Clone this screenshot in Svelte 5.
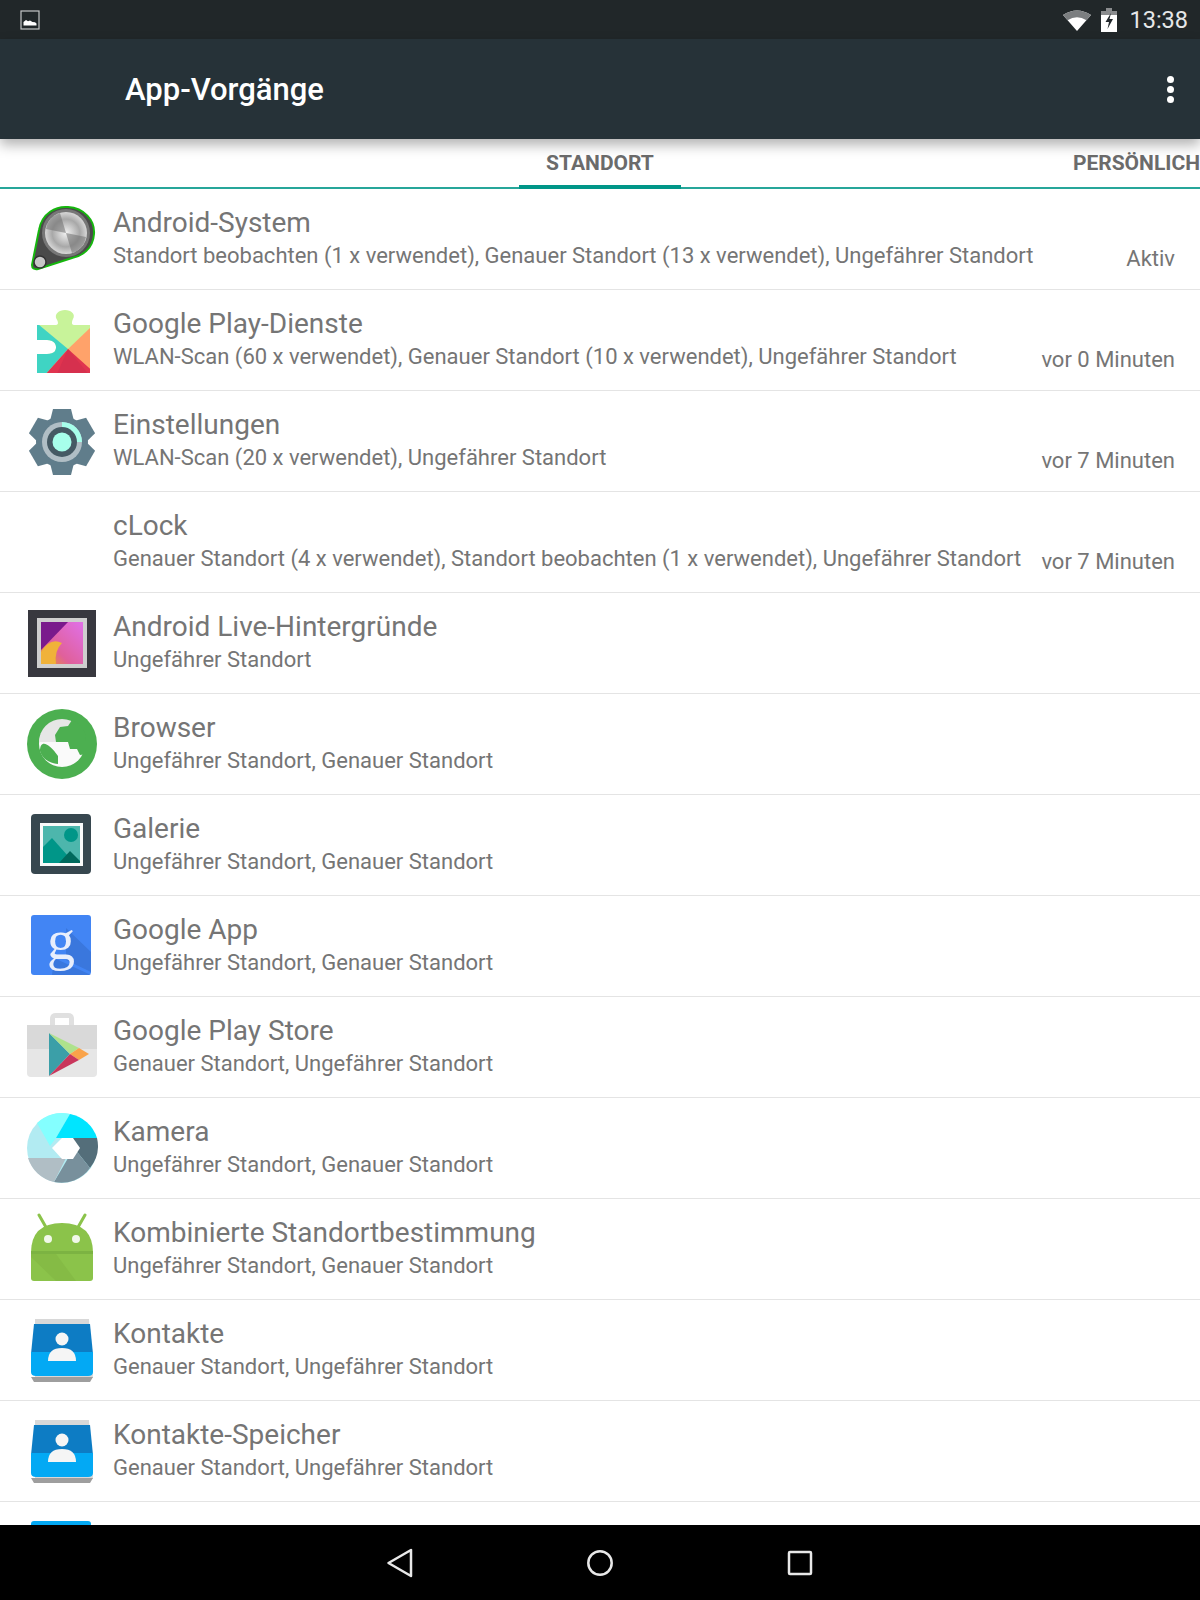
<script>
  const rows = [
    { icon: "system", name: "Android-System", sub: "Standort beobachten (1 x verwendet), Genauer Standort (13 x verwendet), Ungefährer Standort", time: "Aktiv" },
    { icon: "play", name: "Google Play-Dienste", sub: "WLAN-Scan (60 x verwendet), Genauer Standort (10 x verwendet), Ungefährer Standort", time: "vor 0 Minuten" },
    { icon: "gear", name: "Einstellungen", sub: "WLAN-Scan (20 x verwendet), Ungefährer Standort", time: "vor 7 Minuten" },
    { icon: "", name: "cLock", sub: "Genauer Standort (4 x verwendet), Standort beobachten (1 x verwendet), Ungefährer Standort", time: "vor 7 Minuten" },
    { icon: "wall", name: "Android Live-Hintergründe", sub: "Ungefährer Standort" },
    { icon: "browser", name: "Browser", sub: "Ungefährer Standort, Genauer Standort" },
    { icon: "gallery", name: "Galerie", sub: "Ungefährer Standort, Genauer Standort" },
    { icon: "google", name: "Google App", sub: "Ungefährer Standort, Genauer Standort" },
    { icon: "store", name: "Google Play Store", sub: "Genauer Standort, Ungefährer Standort" },
    { icon: "camera", name: "Kamera", sub: "Ungefährer Standort, Genauer Standort" },
    { icon: "android", name: "Kombinierte Standortbestimmung", sub: "Ungefährer Standort, Genauer Standort" },
    { icon: "contacts", name: "Kontakte", sub: "Genauer Standort, Ungefährer Standort" },
    { icon: "contacts", name: "Kontakte-Speicher", sub: "Genauer Standort, Ungefährer Standort" },
    { icon: "messages", name: "Nachrichten", sub: "" }
  ];
</script>

<div class="screen">
  <div class="status">
    <svg class="notif" width="20" height="20" viewBox="0 0 20 20">
      <rect x="1" y="1" width="18" height="18" fill="none" stroke="#c4c6c7" stroke-width="1.2" />
      <path d="M3.5 15.5V12l2.5-2 2 1.2 2-.8 2.5 1.6 2.500.3 1.500 1.200v2z" fill="#fff" />
    </svg>
    <div class="status-right">
      <svg width="30" height="22" viewBox="0 0 30 22">
        <path d="M1 6Q15-3 29 6L15 22z" fill="#fff" />
        <path d="M1 6Q15-3 29 6L24.500 11.200Q15 5.500 5.500 11.200z" fill="#7b7e80" />
      </svg>
      <svg width="16" height="24" viewBox="0 0 16 24">
        <path d="M5 0h6v3h5v21H0V3h5z" fill="#fff" />
        <path d="M5 0h6v3h5v4H0V3h5z" fill="#8a8c8e" />
        <path d="M10 5 4.500 14H8l-1.500 7L12 11H8.500z" fill="#22282c" />
      </svg>
      <span class="clock">13:38</span>
    </div>
  </div>

  <header class="toolbar">
    <h1>App-Vorgänge</h1>
    <div class="overflow"><i></i><i></i><i></i></div>
  </header>

  <div class="tabs">
    <div class="tab active">STANDORT</div>
    <div class="tab right">PERSÖNLICH</div>
  </div>

  <div class="list">
    {#each rows as row}
      <div class="row">
        <div class="icon">
          {#if row.icon === "system"}
            <svg width="72" height="72" viewBox="0 0 72 72">
              <defs>
                <radialGradient id="metal" cx="0.5" cy="0.5" r="0.55">
                  <stop offset="0" stop-color="#f2f2f2" />
                  <stop offset="0.6" stop-color="#a8a8a8" />
                  <stop offset="1" stop-color="#e6e6e6" />
                </radialGradient>
              </defs>
              <path d="M6 62 13 27C16 10 30 3 42 4 58 5 69 17 68 31 67 46 56 53 46 55L12 66Q6 67 6 62z" fill="#4a4a4a" stroke="#16b60e" stroke-width="2" />
              <circle cx="40" cy="30" r="24" fill="#777" />
              <circle cx="40" cy="30" r="21" fill="url(#metal)" />
              <path d="M40 30 20 26Q22 14 34 10zM40 30 60 34Q58 46 46 50z" fill="#6f6f6f" opacity="0.55" />
              <circle cx="14" cy="59" r="6" fill="#c8c8c8" stroke="#333" stroke-width="1.500" />
            </svg>
          {:else if row.icon === "play"}
            <svg width="72" height="72" viewBox="0 0 72 72">
              <defs>
                <clipPath id="puzzle">
                  <path d="M11 21H30C33 21 32 17 30.500 15 28 10 33 6 39 6 45 6 50 10 47 15 46 17 45 21 48 21H64V69H11V50H21C29 50 30 46 30 43 30 40 28 36 21 36H11z" />
                </clipPath>
              </defs>
              <g clip-path="url(#puzzle)">
                <rect width="72" height="72" fill="#c8f39a" />
                <path d="M0 10 42 45 18 72H0z" fill="#3fd4c3" />
                <path d="M42 45 64 24V72z" fill="#ffa26a" />
                <path d="M42 45 72 72H18z" fill="#e0344f" />
                <path d="M42 45 64 72H30z" fill="#d6304e" />
              </g>
            </svg>
          {:else if row.icon === "gear"}
            <svg width="72" height="72" viewBox="0 0 72 72">
              <g fill="#607d8b">
                <circle cx="36" cy="37" r="26" />
                <g id="teeth">
                  <path d="M27 4H45L48 16H24z" />
                  <path d="M27 70H45L48 58H24z" />
                  <path d="M27 4H45L48 16H24z" transform="rotate(60 36 37)" />
                  <path d="M27 4H45L48 16H24z" transform="rotate(120 36 37)" />
                  <path d="M27 4H45L48 16H24z" transform="rotate(240 36 37)" />
                  <path d="M27 4H45L48 16H24z" transform="rotate(300 36 37)" />
                </g>
              </g>
              <circle cx="36" cy="37" r="20" fill="#b0bec5" />
              <path d="M36 17A20 20 0 0 1 56 37H49A13 13 0 0 0 36 24z" fill="#a7ffeb" />
              <circle cx="36" cy="37" r="15" fill="#455a64" />
              <circle cx="36" cy="37" r="9.500" fill="#a7ffeb" />
            </svg>
          {:else if row.icon === "wall"}
            <svg width="72" height="72" viewBox="0 0 72 72">
              <defs>
                <linearGradient id="wallbg" x1="0" y1="1" x2="1" y2="0">
                  <stop offset="0" stop-color="#e8a020" />
                  <stop offset="0.35" stop-color="#e0609a" />
                  <stop offset="1" stop-color="#e070e8" />
                </linearGradient>
              </defs>
              <rect x="2" y="3" width="68" height="67" fill="#38383f" />
              <rect x="11" y="11" width="50" height="50" fill="#cfcfcf" />
              <rect x="15" y="15" width="42" height="42" fill="url(#wallbg)" />
              <path d="M15 15H42L15 43z" fill="#7a1a8c" />
              <path d="M15 57V45Q24 30 36 36 28 44 30 57z" fill="#f0b23a" />
            </svg>
          {:else if row.icon === "browser"}
            <svg width="72" height="72" viewBox="0 0 72 72">
              <circle cx="36" cy="36" r="35" fill="#4caf50" />
              <circle cx="36" cy="36" r="23" fill="#fafafa" />
              <path d="M13 34A23 23 0 0 1 59 34H13z" fill="#e6e6e6" />
              <path d="M14 43C14 30 24 36 32 48V56C22 55 16 50 14 43zM29 27 34 19 42 18 46 12C54 15 61 24 60 33V46L54 47 51 41H44L42 34H30z" fill="#4caf50" />
            </svg>
          {:else if row.icon === "gallery"}
            <svg width="72" height="72" viewBox="0 0 72 72">
              <rect x="5" y="5" width="60" height="60" rx="4" fill="#37474f" />
              <rect x="14" y="14" width="43" height="43" fill="#fafafa" />
              <rect x="17" y="17" width="37" height="37" fill="#4db6ac" />
              <circle cx="45" cy="26" r="7" fill="#009688" />
              <path d="M17 54V38L26 29 42 47 38 54z" fill="#009688" />
              <path d="M33 54 44 42 54 52V54z" fill="#00695c" />
            </svg>
          {:else if row.icon === "google"}
            <svg width="72" height="72" viewBox="0 0 72 72">
              <rect x="5" y="5" width="60" height="60" rx="3" fill="#4285f4" />
              <path d="M28 48 65 65H26zM40 18 65 42V62L40 50z" fill="#3a77dd" />
              <text x="35" y="49" class="g">g</text>
            </svg>
          {:else if row.icon === "store"}
            <svg width="72" height="72" viewBox="0 0 72 72">
              <path d="M24 14V8Q24 2 30 2H42Q48 2 48 8V14H43V7H29V14z" fill="#e0e0e0" />
              <path d="M1 14H71V62Q71 66 67 66H5Q1 66 1 62z" fill="#e6e6e6" />
              <rect x="1" y="14" width="70" height="24" fill="#d9d9d9" />
              <path d="M23 22 44 43 23 65z" fill="#3b9fa8" />
              <path d="M23 22 44 43 53 37z" fill="#aee28c" />
              <path d="M44 43 53 37 63 43 53 49z" fill="#f9a34a" />
              <path d="M23 65 44 43 53 49z" fill="#c9365c" />
            </svg>
          {:else if row.icon === "camera"}
            <svg width="72" height="72" viewBox="0 0 72 72">
              <circle cx="36" cy="36" r="35" fill="#b2ebf2" />
              <path d="M11 11A35 35 0 0 1 44 2L30 26 24 34z" fill="#84ffff" />
              <path d="M44 2A35 35 0 0 1 71 26H36L30 26z" fill="#00e5ff" />
              <path d="M71 26A35 35 0 0 1 64 56L48 36 36 26z" fill="#546e7a" />
              <path d="M64 56A35 35 0 0 1 28 70L48 36z" fill="#78909c" />
              <path d="M28 70A35 35 0 0 1 2 46H40z" fill="#b0bec5" />
              <path d="M26 36 36 26H47L54 36 47 47H36z" fill="#fff" />
            </svg>
          {:else if row.icon === "android"}
            <svg width="72" height="72" viewBox="0 0 72 72">
              <path d="M13 2 21 16M59 2 51 16" stroke="#8bc34a" stroke-width="3" stroke-linecap="round" />
              <path d="M5 40Q5 10 36 10 67 10 67 40V65Q67 68 64 68H8Q5 68 5 65z" fill="#8bc34a" />
              <path d="M5 38H67V41H5z" fill="#7cb342" />
              <path d="M5 41H30L50 68H30L5 44z" fill="#85bb45" />
              <circle cx="22" cy="26" r="4" fill="#f1f8e9" />
              <circle cx="50" cy="26" r="4" fill="#f1f8e9" />
            </svg>
          {:else if row.icon === "contacts"}
            <svg width="72" height="72" viewBox="0 0 72 72">
              <path d="M9 5H63L67 64H9z" fill="#d8d8d8" />
              <path d="M8 10H64L67 40H5z" fill="#0d7cc4" />
              <path d="M5 38H67V58Q67 62 62 62H10Q5 62 5 58z" fill="#03a9f4" />
              <path d="M5 63H67L64 68H8z" fill="#9e9e9e" />
              <circle cx="36" cy="25" r="6.500" fill="#f5f5f5" />
              <path d="M22 47Q22 34 36 34 50 34 50 47z" fill="#f5f5f5" />
            </svg>
          {:else if row.icon === "messages"}
            <svg width="72" height="72" viewBox="0 0 72 72">
              <rect x="5" y="5" width="60" height="60" rx="3" fill="#03a9f4" />
            </svg>
          {/if}
        </div>
        <div class="text">
          <div class="name">{row.name}</div>
          <div class="sub">{row.sub}</div>
        </div>
        {#if row.time}<div class="time">{row.time}</div>{/if}
      </div>
    {/each}
  </div>

  <nav class="navbar">
    <svg width="28" height="30" viewBox="0 0 28 30">
      <path d="M2.500 15 25 2V28z" fill="none" stroke="#e8e8e8" stroke-width="2.500" stroke-linejoin="round" />
    </svg>
    <svg width="28" height="28" viewBox="0 0 28 28">
      <circle cx="14" cy="14" r="11.700" fill="none" stroke="#e8e8e8" stroke-width="2.500" />
    </svg>
    <svg width="26" height="26" viewBox="0 0 26 26">
      <rect x="2" y="2" width="22" height="22" rx="1" fill="none" stroke="#e8e8e8" stroke-width="2.500" />
    </svg>
  </nav>
</div>

<style>
  :global(body) {
    background: #fff;
  }
  .screen {
    width: 1200px;
    height: 1600px;
    position: relative;
    overflow: hidden;
    display: flex;
    flex-direction: column;
    font-family: Roboto, sans-serif;
    background: #fff;
  }
  .status {
    height: 39px;
    background: #212729;
    display: flex;
    align-items: center;
    justify-content: space-between;
    padding: 0 12px 0 20px;
    flex: none;
  }
  .status-right {
    display: flex;
    align-items: center;
    gap: 9px;
  }
  .clock {
    color: #e6e7e8;
    font-size: 23.500px;
    margin-left: 3px;
  }
  .toolbar {
    height: 100px;
    background: #263238;
    display: flex;
    align-items: center;
    justify-content: space-between;
    padding: 0 25px 0 125px;
    box-shadow: 0 6px 12px rgba(0, 0, 0, 0.3);
    position: relative;
    z-index: 2;
    flex: none;
  }
  h1 {
    margin: 0;
    color: #fff;
    font-size: 31px;
    font-weight: 500;
  }
  .overflow {
    display: flex;
    flex-direction: column;
    gap: 3px;
    width: 7px;
    margin-right: 1px;
  }
  .overflow i {
    display: block;
    width: 7px;
    height: 7px;
    border-radius: 50%;
    background: #fff;
  }
  .tabs {
    height: 50px;
    border-bottom: 2px solid #26a69a;
    box-sizing: border-box;
    position: relative;
    flex: none;
  }
  .tab {
    position: absolute;
    top: 0;
    height: 50px;
    line-height: 49px;
    font-size: 21px;
    font-weight: 700;
    color: #6b6b6b;
    box-sizing: border-box;
    text-align: center;
  }
  .tab.active {
    left: 519px;
    width: 162px;
    border-bottom: 4px solid #009688;
  }
  .tab.right {
    right: 0;
  }
  .list {
    flex: 1;
    min-height: 0;
    overflow: hidden;
  }
  .row {
    height: 101px;
    box-sizing: border-box;
    border-bottom: 1px solid #e4e4e4;
    display: flex;
    align-items: center;
    padding: 0 25px 0 26px;
  }
  .icon {
    width: 72px;
    height: 72px;
    margin-right: 15px;
    flex: none;
  }
  .icon svg {
    display: block;
  }
  .g {
    font-family: "Liberation Serif", serif;
    font-size: 56px;
    fill: #e8eefc;
    text-anchor: middle;
  }
  .text {
    flex: 1;
    min-width: 0;
    padding-bottom: 1px;
  }
  .name {
    font-size: 28px;
    line-height: 34px;
    color: #757575;
  }
  .sub {
    font-size: 22px;
    line-height: 32px;
    color: #757575;
    white-space: nowrap;
  }
  .time {
    font-size: 22px;
    line-height: 32px;
    color: #757575;
    align-self: flex-end;
    padding-bottom: 14px;
    flex: none;
  }
  .navbar {
    height: 75px;
    background: #000;
    display: grid;
    grid-template-columns: repeat(3, 200px);
    justify-content: center;
    justify-items: center;
    align-items: center;
    position: absolute;
    left: 0;
    right: 0;
    bottom: 0;
  }
</style>
